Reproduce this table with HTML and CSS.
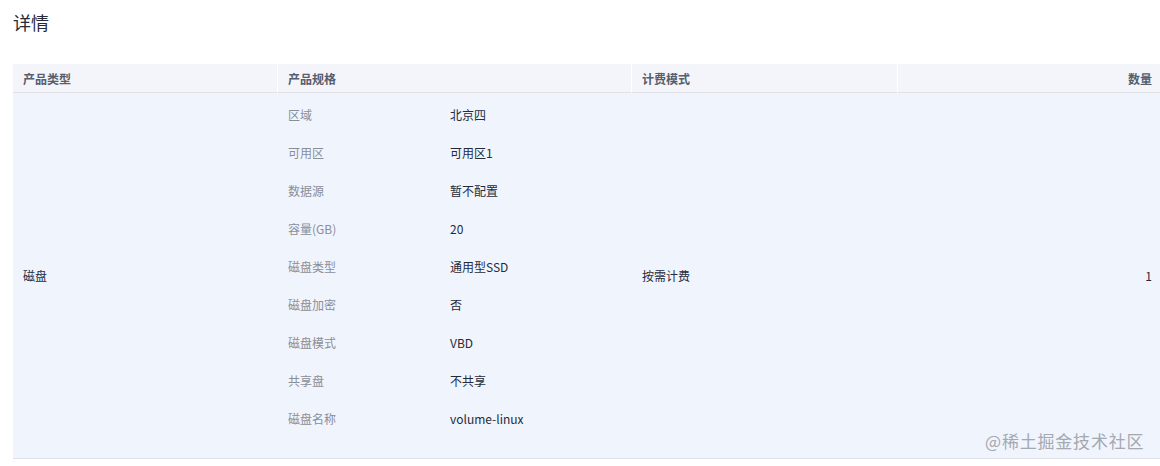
FILE: index.html
```html
<!DOCTYPE html>
<html lang="zh">
<head>
<meta charset="utf-8">
<link rel="stylesheet" href="styles.css">
</head>
<body>
<div class="page">
  <h1 class="title">详情</h1>
  <table class="detail">
    <colgroup>
      <col class="c1"><col class="c2"><col class="c3"><col class="c4">
    </colgroup>
    <thead>
      <tr>
        <th>产品类型</th>
        <th>产品规格</th>
        <th>计费模式</th>
        <th class="num">数量</th>
      </tr>
    </thead>
    <tbody>
      <tr>
        <td>磁盘</td>
        <td class="spec-cell">
          <div class="spec">
            <div class="row"><span class="k">区域</span><span class="v">北京四</span></div>
            <div class="row"><span class="k">可用区</span><span class="v">可用区1</span></div>
            <div class="row"><span class="k">数据源</span><span class="v">暂不配置</span></div>
            <div class="row"><span class="k">容量(GB)</span><span class="v">20</span></div>
            <div class="row"><span class="k">磁盘类型</span><span class="v">通用型SSD</span></div>
            <div class="row"><span class="k">磁盘加密</span><span class="v">否</span></div>
            <div class="row"><span class="k">磁盘模式</span><span class="v">VBD</span></div>
            <div class="row"><span class="k">共享盘</span><span class="v">不共享</span></div>
            <div class="row"><span class="k">磁盘名称</span><span class="v">volume-linux</span></div>
          </div>
        </td>
        <td>按需计费</td>
        <td class="num">1</td>
      </tr>
    </tbody>
  </table>
  <div class="watermark">@稀土掘金技术社区</div>
</div>
</body>
</html>
```

FILE: styles.css
```css
* { box-sizing: border-box; }
html, body { margin: 0; padding: 0; background: #fff; }
body {
  font-family: "Noto Sans CJK SC", "Noto Sans", sans-serif;
  font-size: 12px;
  color: #252b3a;
  width: 1160px;
  height: 466px;
  overflow: hidden;
}
.page {
  position: relative;
  padding: 9px 0 0 13px;
  height: 466px;
}
.title {
  margin: 0;
  font-size: 18px;
  font-weight: 400;
  line-height: 26px;
  color: #252b3a;
  height: 55px;
}
.detail {
  width: 1147px;
  border-collapse: separate;
  border-spacing: 0;
  table-layout: fixed;
}
.c1 { width: 264px; }
.c2 { width: 354px; }
.c3 { width: 266px; }
.c4 { width: 263px; }
.detail th {
  background: #f3f5fb;
  height: 29px;
  padding: 0 10px;
  text-align: left;
  font-weight: 700;
  color: #575d6c;
  font-size: 12px;
  border-bottom: 1px solid #dfe1e6;
}
.detail th + th {
  border-left: 1px solid #ffffff;
  padding-left: 10px;
}
.detail th.num, .detail td.num { text-align: right; padding-right: 8px; }
.detail td {
  background: #f0f4fd;
  padding: 0 10px;
  vertical-align: middle;
  border-bottom: 1px solid #dfe1e6;
  height: 366px;
}
.detail td + td { padding-left: 11px; }
.spec {
  display: flex;
  flex-direction: column;
  padding: 2px 0 21px;
}
.row {
  display: grid;
  grid-template-columns: 162px 1fr;
  height: 38px;
  align-items: center;
}
.k { color: #8a8e99; }
.v { color: #252b3a; }
.watermark {
  position: absolute;
  left: 985px;
  top: 428px;
  font-size: 17px;
  color: #a4a8b0;
  letter-spacing: 0.8px;
  white-space: nowrap;
}
```
